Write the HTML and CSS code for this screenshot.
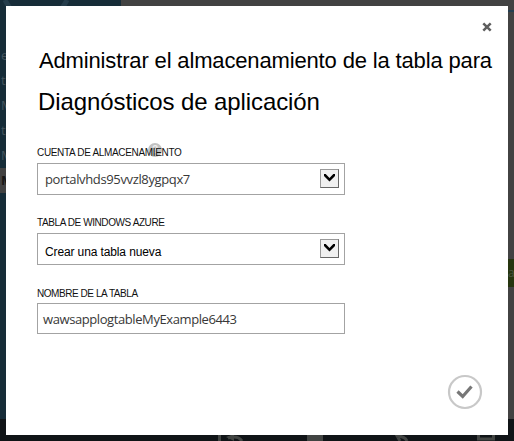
FILE: index.html
```html
<!DOCTYPE html>
<html lang="es">
<head>
<meta charset="utf-8">
<title>Administrar el almacenamiento</title>
<link rel="stylesheet" href="styles.css">
</head>
<body>
<div class="portal">
  <div class="workspace">
    <nav class="sidebar">
      <svg class="ring" width="70" height="6" viewBox="0 0 70 6"><path d="M5 0q2 4 5 8M67 0q-2 4-5 8" fill="none" stroke="#253d4b" stroke-width="5"/></svg>
      <span>e</span><span>te</span><span>M</span><span>te</span><span>M</span><span class="selected">M</span>
    </nav>
    <main class="content"><div class="rule"></div><div class="tag">a</div></main>
  </div>
  <footer class="commands">
    <svg width="514" height="22" viewBox="0 419 514 22">
      <g fill="none" stroke="#414442" stroke-width="3">
        <path d="M219.500 435v6M228 438q10-3 14 3"/>
        <path d="M396 436q9 0 11 5M396 434l4 7"/>
        <path d="M478.500 434v5h15v-5"/>
      </g>
      <path d="M226 437l8-3v7zM307 435h16v6h-16z" fill="#414442"/>
    </svg>
  </footer>
</div>
<section class="dialog">
  <button class="close" aria-label="Cerrar"><svg width="10" height="10" viewBox="0 0 10 10"><path d="M1.300 1.300l7.400 7.400M8.700 1.300l-7.400 7.400" stroke="#5e5e5e" stroke-width="2.500"/></svg></button>
  <h1><span class="line-one">Administrar el almacenamiento de la tabla para</span><span class="line-two">Diagnósticos de aplicación</span></h1>
  <div class="field">
    <label><span class="label-account">CUENTA DE ALMACENAMIENTO</span><i class="help">?</i></label>
    <div class="box"><span class="account">portalvhds95vvzl8ygpqx7</span><span class="arrow"><svg width="17" height="17" viewBox="0 0 17 17"><path d="M3 4h1.700l3.800 4 3.800-4H14v2.100l-5.500 5.500L3 6.100z"/></svg></span></div>
  </div>
  <div class="field">
    <label><span class="label-table">TABLA DE WINDOWS AZURE</span></label>
    <div class="box"><span class="option">Crear una tabla nueva</span><span class="arrow"><svg width="17" height="17" viewBox="0 0 17 17"><path d="M3 4h1.700l3.800 4 3.800-4H14v2.100l-5.500 5.500L3 6.100z"/></svg></span></div>
  </div>
  <div class="field">
    <label><span class="label-name">NOMBRE DE LA TABLA</span></label>
    <div class="box input"><span class="name">wawsapplogtableMyExample6443</span></div>
  </div>
  <button class="accept" aria-label="Aceptar"><svg width="36" height="36" viewBox="0 0 36 36"><circle cx="18" cy="18" r="16" fill="none" stroke="#c8c8c8" stroke-width="2.200"/><path d="M10.500 17.500l5.200 5L24.500 12.500" fill="none" stroke="#777" stroke-width="3.200"/></svg></button>
</section>
</body>
</html>
```

FILE: styles.css
```css
* { box-sizing: border-box; }
body { margin: 0; width: 514px; height: 441px; overflow: hidden; font-family: "Liberation Sans", Arial, sans-serif; }
.portal { display: flex; flex-direction: column; height: 441px; }
.workspace { display: flex; flex: 1; }
.sidebar { width: 121px; background: #162c38; color: #44545d; font: 13px/25px "Open Sans", sans-serif; overflow: hidden; }
.ring { display: block; margin-bottom: 37px; }
.sidebar span { display: block; height: 25px; padding-left: 1px; }
.sidebar .selected { background: #424242; color: #151515; font-weight: 700; }
.content { flex: 1; background: #424242; }
.rule { width: 6px; height: 2px; margin: 10px 0 0 auto; background: #243e50; }
.tag { width: 6px; height: 28px; margin: 247px 0 0 auto; background: #26350f; color: #4c5541; font: 12px/28px "Open Sans", sans-serif; letter-spacing: -1px; }
.commands { height: 22px; background: #101417; }
.commands svg { display: block; }
.dialog { position: absolute; left: 6px; top: 6px; width: 502px; height: 429px; padding-left: 31px; background: #fff; display: flex; flex-direction: column; }
button { padding: 0; border: 0; background: none; display: block; }
.close { margin: 16px 16px 0 auto; width: 10px; height: 10px; }
.close svg, .accept svg { display: block; }
h1 { margin: 8px 0 0; color: #000; font-weight: 400; white-space: nowrap; }
h1 span { display: block; width: max-content; }
.line-one { margin-left: 2px; font-size: 22px; line-height: 41px; letter-spacing: -0.15px; }
.line-two { margin-left: 1px; font-size: 24px; line-height: 41px; letter-spacing: -0.09px; }
.field { width: 308px; height: 70px; }
h1 + .field { margin-top: 18px; }
label { display: flex; position: relative; height: 23px; font-size: 10px; line-height: 26px; color: #111; white-space: nowrap; }
label span { position: relative; z-index: 1; }
.label-account { letter-spacing: -0.33px; }
.label-table { letter-spacing: -0.41px; }
.label-name { padding-top: 1px; letter-spacing: -0.44px; }
.help { position: absolute; left: 111px; top: 3px; width: 14px; height: 14px; border-radius: 50%; background: #c2c2c2; color: #eee; font: 700 10px/14px "Liberation Sans", sans-serif; text-align: center; }
.box { display: flex; align-items: center; height: 32px; border: 1px solid #a3a3a3; padding: 0 5px 0 7px; white-space: nowrap; color: #383838; font: 13px/18px "Open Sans", sans-serif; }
.box.input { height: 31px; padding-left: 5px; }
.account { letter-spacing: -0.36px; }
.name { letter-spacing: -0.41px; }
.arrow { width: 19px; height: 19px; margin-left: auto; margin-bottom: 1px; border: 1px solid; border-color: #999 #666 #666 #999; background: #f0f0f0; }
.arrow svg { display: block; }
.option { padding-top: 6px; font: 12px/14px "Liberation Sans", sans-serif; letter-spacing: -0.12px; color: #000; }
.accept { width: 36px; height: 36px; margin: auto 25px 25px auto; }
```
